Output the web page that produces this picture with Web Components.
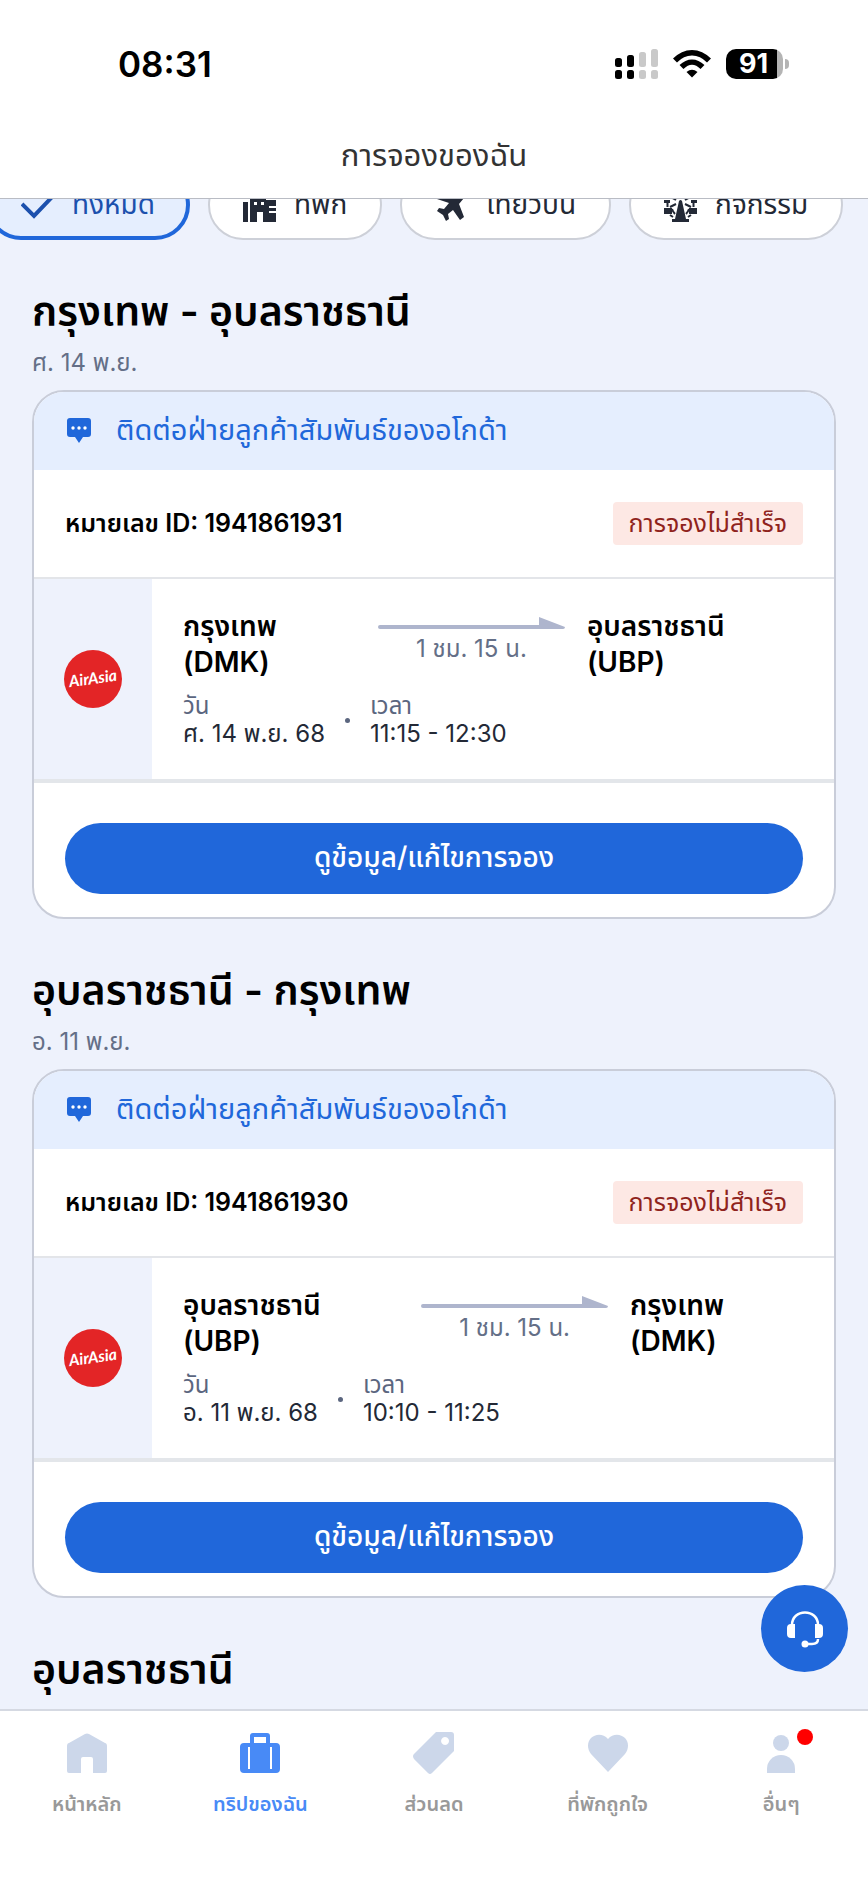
<!DOCTYPE html>
<html lang="th">
<head>
<meta charset="utf-8">
<meta name="viewport" content="width=device-width, initial-scale=1">
<title>การจองของฉัน</title>
<style>
  html, body { margin: 0; height: 100%; }
  body { font-family: Inter, "Noto Sans Thai", "Noto Sans", sans-serif; color: #000; background: #eef2fc; }
</style>
</head>
<body>
<trips-app>
  <status-bar slot="top" time="08:31" battery="91"></status-bar>
  <page-title slot="top">การจองของฉัน</page-title>

  <filter-row>
    <filter-chip icon="check" selected>ทั้งหมด</filter-chip>
    <filter-chip icon="hotel">ที่พัก</filter-chip>
    <filter-chip icon="plane">เที่ยวบิน</filter-chip>
    <filter-chip icon="wheel">กิจกรรม</filter-chip>
  </filter-row>

  <trip-section heading="กรุงเทพ - อุบลราชธานี" date="ศ. 14 พ.ย.">
    <booking-card booking="1941861931">
      <flight-leg style="--from: 4fr; --to: 5fr" duration="1 ชม. 15 น." date="ศ. 14 พ.ย. 68" time="11:15 - 12:30">
        <span slot="from">กรุงเทพ<br>(DMK)</span>
        <span slot="to">อุบลราชธานี<br>(UBP)</span>
      </flight-leg>
    </booking-card>
  </trip-section>

  <trip-section heading="อุบลราชธานี - กรุงเทพ" date="อ. 11 พ.ย.">
    <booking-card booking="1941861930">
      <flight-leg style="--from: 5fr; --to: 4fr" duration="1 ชม. 15 น." date="อ. 11 พ.ย. 68" time="10:10 - 11:25">
        <span slot="from">อุบลราชธานี<br>(UBP)</span>
        <span slot="to">กรุงเทพ<br>(DMK)</span>
      </flight-leg>
    </booking-card>
  </trip-section>

  <trip-section heading="อุบลราชธานี"></trip-section>

  <help-button slot="float"></help-button>

  <tab-bar slot="bottom">
    <tab-item icon="home">หน้าหลัก</tab-item>
    <tab-item icon="bag" active>ทริปของฉัน</tab-item>
    <tab-item icon="tag">ส่วนลด</tab-item>
    <tab-item icon="heart">ที่พักถูกใจ</tab-item>
    <tab-item icon="person" badge>อื่นๆ</tab-item>
  </tab-bar>
</trips-app>

<script>
const ICONS = {
  check: '<svg viewBox="0 0 33 33"><path d="M1 15l12 12L32 7" fill="none" stroke="currentColor" stroke-width="4"/></svg>',
  hotel: '<svg viewBox="0 0 33 33"><path fill="currentColor" fill-rule="evenodd" d="M0 13h5v20H0zM7 10h3V7h4V3h6v4h3v4h10v22H20V23h-6v10H7zM11 13v3h3v-3zM18 13v3h3v-3zM26 17v2h7v-2zM26 22v2h7v-2z"/></svg>',
  plane: '<svg viewBox="0 0 33 33"><path fill="currentColor" d="M30 2c2 2 1 5-1 7l-5 6 5 13-4 3-7-10-5 4 1 5-3 2-3-6-6-4 2-3 5 1 5-6L2 10l4-4 13 4 5-6c2-2 5-4 6-2z"/></svg>',
  wheel: '<svg viewBox="0 0 33 33"><g fill="none" stroke="currentColor" stroke-width="2"><path d="M3.500 11v7M29.500 11v7M6 26l3 2M27 26l-3 2M8 20q1 3 3 5M25 20q-1 3-3 5"/><path d="M12 11L5 7M21 11l7-4M12 15l-6 3M21 15l6 3M16.500 8V1"/></g><g fill="currentColor"><path d="M15 12q1.500-2 3 0l4 18h3v4H8v-4h3z"/><path d="M0 19h8v6H0zM25 19h8v6h-8zM0 11h6v3H0zM27 11h6v3h-6z"/></g></svg>',
  home: '<svg viewBox="0 0 44 44"><path fill="currentColor" d="M2 15c0-2 1-3 2-3L20 3q2-1 4 0l16 9c1 0 2 1 2 3v25q0 2-2 2H28V28q0-2-2-2h-8q-2 0-2 2v14H4q-2 0-2-2z"/></svg>',
  bag: '<svg viewBox="0 0 44 44"><path fill="currentColor" fill-rule="evenodd" d="M12 12V5q0-3 3-3h14q3 0 3 3v7h6q4 0 4 4v22q0 4-4 4H6q-4 0-4-4V16q0-4 4-4zM16 12h12V6H16z"/><path d="M11 16v22M33 16v22" stroke="#fff" stroke-width="2"/></svg>',
  tag: '<svg viewBox="0 0 44 44"><path fill="currentColor" fill-rule="evenodd" d="M24 1h15q3 0 3 3v16L20 42q-2 2-4 0L2 28q-2-3 0-5zM33 6a4 4 0 1 0 .1 0z"/></svg>',
  heart: '<svg viewBox="0 0 44 44"><path fill="currentColor" d="M22 41L5 23C1 18 1 11 5 7s12-5 17 1c5-6 13-5 17-1s4 11 0 16z"/></svg>',
  person: '<svg viewBox="0 0 44 44"><g fill="currentColor"><circle cx="22" cy="12" r="8"/><path d="M8 42v-4a14 14 0 0 1 28 0v4z"/></g></svg>'
};

function define(name, render) {
  customElements.define(name, class extends HTMLElement {
    connectedCallback() {
      if (!this.shadowRoot) this.attachShadow({ mode: 'open' }).innerHTML = render(this);
    }
  });
}

define('trips-app', () => `
  <style>
    :host { display: flex; flex-direction: column; height: 100vh; }
    header { flex: none; background: #fff; border-bottom: 1px solid #b9bcc4; }
    .view { flex: 1; min-height: 0; position: relative; display: flex; flex-direction: column; }
    main { flex: 1; min-height: 0; overflow: hidden; }
    footer { flex: none; background: #fff; border-top: 2px solid #d5d9e2; }
    .float { position: absolute; right: 20px; bottom: 37px; }
  </style>
  <header><slot name="top"></slot></header>
  <div class="view">
    <main><slot></slot></main>
    <div class="float"><slot name="float"></slot></div>
  </div>
  <footer><slot name="bottom"></slot></footer>`);

define('status-bar', el => `
  <style>
    :host { display: flex; justify-content: space-between; align-items: center; height: 128px; padding: 0 79px 0 118px; }
    time { font-size: 35px; font-weight: 600; }
    .icons { display: flex; gap: 15px; align-items: center; }
    svg { display: block; }
    .battery { display: flex; align-items: center; gap: 2px; }
    .cell { width: 57px; height: 30px; border-radius: 10px; box-sizing: border-box; padding-right: 2px; background: linear-gradient(90deg, #000 51px, #b4b4b4 51px);
      color: #fff; font-size: 27px; line-height: 30px; font-weight: 700; text-align: center; }
    .nub { width: 4px; height: 10px; border-radius: 0 5px 5px 0; background: #b4b4b4; }
  </style>
  <time>${el.getAttribute('time')}</time>
  <div class="icons">
    <svg width="43" height="30" viewBox="0 0 43 30">
      <g fill="#c9c9c9"><rect x="24" y="3" width="7" height="15" rx="2.5"/><rect x="36" width="7" height="18" rx="2.5"/><rect x="24" y="21" width="7" height="9" rx="2.5"/><rect x="36" y="21" width="7" height="9" rx="2.5"/></g>
      <rect y="9" width="7" height="9" rx="2.5"/><rect x="12" y="6" width="7" height="12" rx="2.5"/><rect y="21" width="7" height="9" rx="2.5"/><rect x="12" y="21" width="7" height="9" rx="2.5"/>
    </svg>
    <svg width="38" height="30" viewBox="0 0 38 30">
      <g fill="none" stroke="#000" stroke-width="5.5"><path d="M2 11.500C12 1 26 1 36 11.500"/><path d="M8.500 18C15 11.500 23 11.500 29.500 18"/></g>
      <path d="M19 28.500l-5.500-5.500q5.500-4.500 11 0z"/>
    </svg>
    <div class="battery"><div class="cell">${el.getAttribute('battery')}</div><div class="nub"></div></div>
  </div>`);

define('page-title', () => `
  <style>
    :host { display: block; height: 70px; }
    h1 { margin: 0; font-size: 31px; line-height: 54px; font-weight: 400; color: #333; text-align: center; }
  </style>
  <h1><slot></slot></h1>`);

define('filter-row', () => `
  <style>
    :host { display: flex; gap: 18px; margin: -29px 0 0 -14px; }
  </style>
  <slot></slot>`);

define('filter-chip', el => `
  <style>
    :host { display: block; flex: none; }
    button { display: flex; align-items: center; gap: 18px; height: 70px; padding: 0 33px; border: 2px solid #cdd0d8; border-radius: 35px;
      background: #fff; color: #232936; font: inherit; font-size: 28px; white-space: nowrap; }
    :host([selected]) button { padding: 0 31px; border: 4px solid #2067da; background: #e5eefe; color: #1c50ad; }
    svg { display: block; width: 33px; height: 33px; }
  </style>
  <button type="button" aria-pressed="${el.hasAttribute('selected')}">${ICONS[el.getAttribute('icon')]}<slot></slot></button>`);

define('trip-section', el => `
  <style>
    :host { display: block; padding: 47px 32px 0; }
    h2 { margin: 0; font-size: 41px; line-height: 48px; font-weight: 600; }
    p { margin: 10px 0 9px; font-size: 24px; line-height: 36px; color: #646f87; }
  </style>
  <h2>${el.getAttribute('heading')}</h2>
  ${el.hasAttribute('date') ? `<p>${el.getAttribute('date')}</p>` : ''}
  <slot></slot>`);

define('booking-card', el => `
  <style>
    :host { display: block; border: 2px solid #c9cdd9; border-radius: 32px; background: #fff; overflow: hidden; }
    .contact { display: flex; align-items: center; gap: 24px; height: 78px; padding: 0 32px; background: #e5eefe; color: #2067da; font-size: 29px; text-decoration: none; }
    .contact svg { width: 26px; height: 28px; }
    .id { display: flex; align-items: center; justify-content: space-between; height: 107px; padding: 0 31px; font-size: 25px; font-weight: 600; border-bottom: 2px solid #e3e5e9; }
    .status { padding: 0 16px; border-radius: 4px; background: #fde8e4; color: #8f231c; font-weight: 400; line-height: 43px; }
    .action { padding: 40px 31px 23px; border-top: 4px solid #e3e6ea; }
    button { display: block; width: 100%; height: 71px; border: 0; border-radius: 36px; background: #2067da; color: #fff; font: inherit; font-size: 28px; font-weight: 500; }
  </style>
  <a class="contact" href="#contact">
    <svg viewBox="0 0 26 28"><path fill="#2067da" d="M4 1h18q3 0 3 3v13q0 3-3 3h-5l-4 6-4-6H4q-3 0-3-3V4q0-3 3-3z"/><g fill="#fff"><circle cx="7" cy="11" r="1.700"/><circle cx="13" cy="11" r="1.700"/><circle cx="19" cy="11" r="1.700"/></g></svg>
    ติดต่อฝ่ายลูกค้าสัมพันธ์ของอโกด้า
  </a>
  <div class="id"><span>หมายเลข ID: ${el.getAttribute('booking')}</span><span class="status">การจองไม่สำเร็จ</span></div>
  <slot></slot>
  <div class="action"><button type="button">ดูข้อมูล/แก้ไขการจอง</button></div>`);

define('flight-leg', el => `
  <style>
    :host { display: flex; min-height: 200px; }
    .carrier { flex: none; width: 118px; display: flex; align-items: center; justify-content: center; background: #eef2fc; }
    .detail { flex: 1; padding: 29px 31px 0; }
    .route { display: grid; grid-template-columns: var(--from) 187px var(--to); column-gap: 22px; font-size: 28px; line-height: 36px; font-weight: 600; }
    .way { padding-top: 8px; }
    .way svg { display: block; width: 100%; height: 13px; }
    .way span { display: block; text-align: center; font-size: 24px; line-height: 40px; font-weight: 400; color: #646f87; }
    .when { display: flex; align-items: center; gap: 20px; margin-top: 12px; font-size: 24px; line-height: 28px; color: #232936; }
    dl, dt, dd { margin: 0; }
    dt { color: #5b667f; }
    i { width: 5px; height: 5px; border-radius: 50%; background: #5b667f; }
  </style>
  <div class="carrier">
    <svg width="60" height="60" viewBox="0 0 60 60" role="img" aria-label="AirAsia"><circle cx="30" cy="30" r="29" fill="#e32526"/><text x="30" y="35" transform="rotate(-8 30 30)" text-anchor="middle" font-family="Lato" font-style="italic" font-weight="700" font-size="16" fill="#fff">AirAsia</text></svg>
  </div>
  <div class="detail">
    <div class="route">
      <slot name="from"></slot>
      <div class="way"><svg viewBox="0 0 187 13"><path fill="#aeb5cd" d="M2 9h159V1l26 10q0 2-2 2H2q-2 0-2-2t2-2z"/></svg><span>${el.getAttribute('duration')}</span></div>
      <slot name="to"></slot>
    </div>
    <div class="when">
      <dl><dt>วัน</dt><dd>${el.getAttribute('date')}</dd></dl>
      <i></i>
      <dl><dt>เวลา</dt><dd>${el.getAttribute('time')}</dd></dl>
    </div>
  </div>`);

define('help-button', () => `
  <style>
    :host { display: block; }
    button { display: flex; align-items: center; justify-content: center; width: 87px; height: 87px; padding: 0; border: 0; border-radius: 50%; background: #2067da; }
  </style>
  <button type="button" aria-label="ช่วยเหลือ">
    <svg width="38" height="38" viewBox="0 0 38 38"><g fill="none" stroke="#fff" stroke-width="2.500"><path d="M6 15C6 7 12 2.500 19 2.500S32 7 32 15"/><path d="M32 29c0 4-3 5-6 5h-7"/></g><g fill="#fff"><path d="M9 14v14H5q-4 0-4-4v-6q0-4 4-4zM29 14v14h4q4 0 4-4v-6q0-4-4-4z"/><circle cx="19" cy="34" r="3.500"/></g></svg>
  </button>`);

define('tab-bar', () => `
  <style>
    :host { display: block; padding: 20px 0 64px; }
    nav { display: grid; grid-template-columns: repeat(5, minmax(0, 1fr)); }
  </style>
  <nav><slot></slot></nav>`);

define('tab-item', el => `
  <style>
    :host { display: block; }
    a { display: flex; flex-direction: column; align-items: center; gap: 12px; color: #999; font-size: 20px; line-height: 35px; font-weight: 600; text-decoration: none; }
    .icon { position: relative; color: #ccd7ea; }
    svg { display: block; width: 44px; height: 44px; }
    :host([active]) a, :host([active]) .icon { color: #488af6; }
    .dot { position: absolute; top: -2px; right: -10px; width: 16px; height: 16px; border-radius: 50%; background: #f00; }
  </style>
  <a href="#${el.getAttribute('icon')}"${el.hasAttribute('active') ? ' aria-current="page"' : ''}>
    <span class="icon">${ICONS[el.getAttribute('icon')]}${el.hasAttribute('badge') ? '<span class="dot"></span>' : ''}</span>
    <span><slot></slot></span>
  </a>`);
</script>
</body>
</html>
